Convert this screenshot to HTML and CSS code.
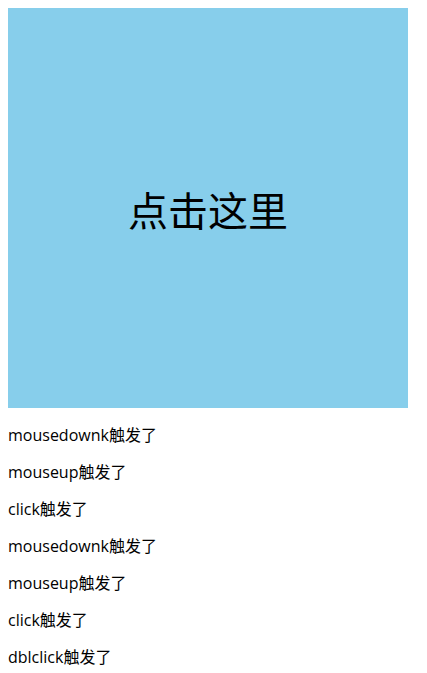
FILE: index.html
```html
<!DOCTYPE html>
<html lang="zh">
<head>
<meta charset="utf-8">
<link rel="stylesheet" href="styles.css">
</head>
<body>
<div class="box">点击这里</div>
<div class="log">
<p>mousedownk触发了</p>
<p>mouseup触发了</p>
<p>click触发了</p>
<p>mousedownk触发了</p>
<p>mouseup触发了</p>
<p>click触发了</p>
<p>dblclick触发了</p>
</div>
</body>
</html>
```
FILE: styles.css
```css
body {
  margin: 8px;
  font-family: "Open Sans", "Noto Sans CJK SC", sans-serif;
  font-size: 16px;
  color: #000;
  background: #fff;
}
.box {
  width: 400px;
  height: 400px;
  background: #87ceeb;
  display: flex;
  align-items: center;
  justify-content: center;
  font-family: "Noto Sans CJK SC", sans-serif;
  font-size: 40px;
  line-height: 53px;
  padding-top: 2px;
  box-sizing: border-box;
}
.log p {
  margin: 16px 0;
  line-height: 21px;
  padding-top: 1px;
  height: 21px;
  box-sizing: border-box;
}
```
